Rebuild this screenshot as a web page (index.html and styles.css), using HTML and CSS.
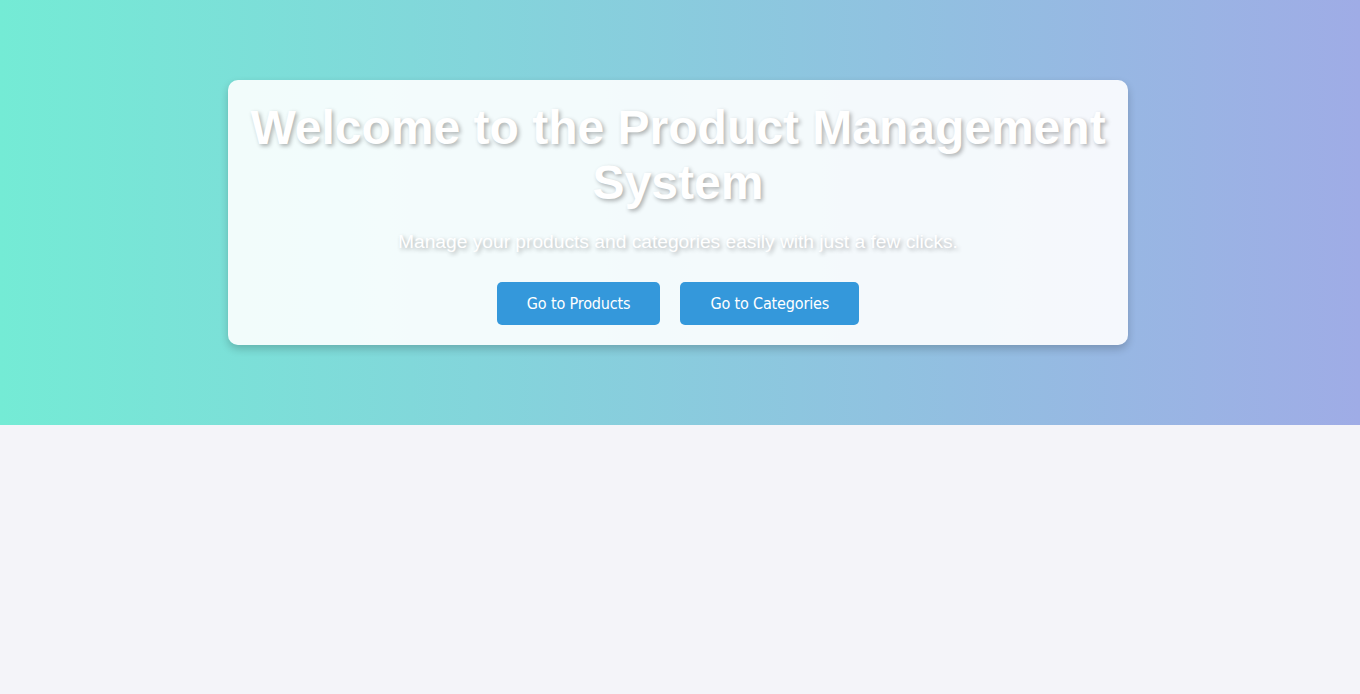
FILE: index.html
```html
<!DOCTYPE html>
<html lang="en">
<head>
<meta charset="utf-8">
<title>Product Management System</title>
<link rel="stylesheet" href="styles.css">
</head>
<body>
<header class="hero">
  <div class="card">
    <h1 class="title">Welcome to the Product Management System</h1>
    <p class="subtitle">Manage your products and categories easily with just a few clicks.</p>
    <div class="actions">
      <a class="btn" href="#">Go to Products</a>
      <a class="btn" href="#">Go to Categories</a>
    </div>
  </div>
</header>
</body>
</html>
```
FILE: styles.css
```css
html, body {
  margin: 0;
  padding: 0;
}
body {
  background: #f4f4f9;
  font-family: "Liberation Sans", Arial, sans-serif;
  height: 694px;
}
.hero {
  background: linear-gradient(to right, #74ebd5, #9face6);
  padding: 80px 0;
  display: flex;
  justify-content: center;
}
.card {
  width: 900px;
  box-sizing: border-box;
  margin-left: -4px;
  padding: 20px;
  background: rgba(255, 255, 255, 0.9);
  border-radius: 10px;
  box-shadow: 0 4px 8px rgba(0, 0, 0, 0.2);
  text-align: center;
}
.title {
  margin: 0;
  font-size: 48px;
  font-weight: bold;
  color: #fff;
  text-shadow: 2px 2px 4px rgba(0, 0, 0, 0.3);
}
.subtitle {
  margin: 21px 0 29px;
  font-size: 19.2px;
  line-height: 22px;
  color: #fff;
  text-shadow: 2px 2px 4px rgba(0, 0, 0, 0.3);
}
.actions {
  display: flex;
  justify-content: center;
  gap: 20px;
}
.btn {
  display: inline-block;
  padding: 11px 30px;
  background: #3498db;
  color: #fff;
  text-decoration: none;
  border-radius: 5px;
  font-family: "DejaVu Sans Condensed", "DejaVu Sans", sans-serif;
  font-size: 16px;
  line-height: 21px;
  letter-spacing: -0.15px;
}
```
